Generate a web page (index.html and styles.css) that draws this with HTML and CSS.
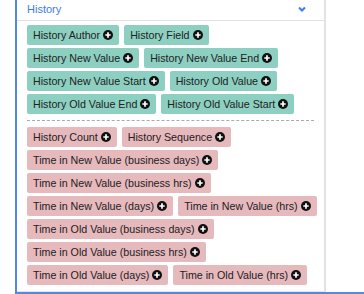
FILE: index.html
```html
<!DOCTYPE html>
<html>
   <head>
      <meta charset="UTF-8">
      <meta name="viewport" content="width=device-width, initial-scale=1">
      <title>Fields</title>
      <link rel="stylesheet" href="styles.css">
   </head>
   <body>
      <div class="frame">
       <div class="panel">
         <div class="panel-head">
            <span class="panel-title">History</span>
            <svg class="chevron" width="8" height="6" viewBox="0 0 8 6"><polyline points="1,1.5 4,4.5 7,1.5" fill="none" stroke="#3b7ee2" stroke-width="2"/></svg>
         </div>
         <div class="panel-body">
            <div class="tags">
               <span class="tag green">History Author <svg class="plus" viewBox="0 0 10 10"><circle cx="5" cy="5" r="5"/><path d="M5 2.3v5.4M2.3 5h5.4"/></svg></span>
               <span class="tag green">History Field <svg class="plus" viewBox="0 0 10 10"><circle cx="5" cy="5" r="5"/><path d="M5 2.3v5.4M2.3 5h5.4"/></svg></span>
               <span class="tag green">History New Value <svg class="plus" viewBox="0 0 10 10"><circle cx="5" cy="5" r="5"/><path d="M5 2.3v5.4M2.3 5h5.4"/></svg></span>
               <span class="tag green">History New Value End <svg class="plus" viewBox="0 0 10 10"><circle cx="5" cy="5" r="5"/><path d="M5 2.3v5.4M2.3 5h5.4"/></svg></span>
               <span class="tag green">History New Value Start <svg class="plus" viewBox="0 0 10 10"><circle cx="5" cy="5" r="5"/><path d="M5 2.3v5.4M2.3 5h5.4"/></svg></span>
               <span class="tag green">History Old Value <svg class="plus" viewBox="0 0 10 10"><circle cx="5" cy="5" r="5"/><path d="M5 2.3v5.4M2.3 5h5.4"/></svg></span>
               <span class="tag green">History Old Value End <svg class="plus" viewBox="0 0 10 10"><circle cx="5" cy="5" r="5"/><path d="M5 2.3v5.4M2.3 5h5.4"/></svg></span>
               <span class="tag green">History Old Value Start <svg class="plus" viewBox="0 0 10 10"><circle cx="5" cy="5" r="5"/><path d="M5 2.3v5.4M2.3 5h5.4"/></svg></span>
            </div>
            <div class="divider"></div>
            <div class="tags">
               <span class="tag pink">History Count <svg class="plus" viewBox="0 0 10 10"><circle cx="5" cy="5" r="5"/><path d="M5 2.3v5.4M2.3 5h5.4"/></svg></span>
               <span class="tag pink">History Sequence <svg class="plus" viewBox="0 0 10 10"><circle cx="5" cy="5" r="5"/><path d="M5 2.3v5.4M2.3 5h5.4"/></svg></span>
               <span class="tag pink">Time in New Value (business days) <svg class="plus" viewBox="0 0 10 10"><circle cx="5" cy="5" r="5"/><path d="M5 2.3v5.4M2.3 5h5.4"/></svg></span>
               <span class="tag pink">Time in New Value (business hrs) <svg class="plus" viewBox="0 0 10 10"><circle cx="5" cy="5" r="5"/><path d="M5 2.3v5.4M2.3 5h5.4"/></svg></span>
               <span class="tag pink">Time in New Value (days) <svg class="plus" viewBox="0 0 10 10"><circle cx="5" cy="5" r="5"/><path d="M5 2.3v5.4M2.3 5h5.4"/></svg></span>
               <span class="tag pink">Time in New Value (hrs) <svg class="plus" viewBox="0 0 10 10"><circle cx="5" cy="5" r="5"/><path d="M5 2.3v5.4M2.3 5h5.4"/></svg></span>
               <span class="tag pink">Time in Old Value (business days) <svg class="plus" viewBox="0 0 10 10"><circle cx="5" cy="5" r="5"/><path d="M5 2.3v5.4M2.3 5h5.4"/></svg></span>
               <span class="tag pink">Time in Old Value (business hrs) <svg class="plus" viewBox="0 0 10 10"><circle cx="5" cy="5" r="5"/><path d="M5 2.3v5.4M2.3 5h5.4"/></svg></span>
               <span class="tag pink">Time in Old Value (days) <svg class="plus" viewBox="0 0 10 10"><circle cx="5" cy="5" r="5"/><path d="M5 2.3v5.4M2.3 5h5.4"/></svg></span>
               <span class="tag pink">Time in Old Value (hrs) <svg class="plus" viewBox="0 0 10 10"><circle cx="5" cy="5" r="5"/><path d="M5 2.3v5.4M2.3 5h5.4"/></svg></span>
            </div>
         </div>
       </div>
      </div>
   </body>
</html>
```
FILE: styles.css
```css
body {
margin: 0;
font-family: "Liberation Sans", Arial, sans-serif;
background-color: #FFF;
}
.frame {
margin-left: 15px;
border-left: 2px solid #4f8ae6;
border-bottom: 2px solid #4f8ae6;
}
.panel {
width: 307px;
height: 291px;
border-right: 2px solid #e2e2e2;
border-bottom: 1px solid #e6e6e6;
}
.panel-head {
display: flex;
align-items: center;
justify-content: space-between;
height: 20px;
padding: 0 18px 0 10px;
border-bottom: 1px solid #e2e2e2;
}
.panel-title {
color: #3b7ee2;
font-size: 11px;
line-height: 18px;
padding-bottom: 2px;
}
.chevron {
display: block;
margin-top: -3px;
}
.panel-body {
padding: 4px 3px 0 10px;
}
.tags {
display: flex;
flex-wrap: wrap;
gap: 3px 5px;
}
.tag {
display: inline-flex;
align-items: center;
height: 20px;
padding: 0 6px;
border-radius: 2px;
font-size: 10.7px;
color: #222;
white-space: nowrap;
}
.green {
background-color: #8dd0c1;
}
.pink {
background-color: #e6b9bd;
}
.plus {
width: 10px;
height: 10px;
margin-left: 3px;
}
.plus circle {
fill: #111;
}
.plus path {
stroke: #FFF;
stroke-width: 1.7;
}
.divider {
margin: 6px 7px 6px 0;
border-top: 1px dashed #aaa;
}
```
